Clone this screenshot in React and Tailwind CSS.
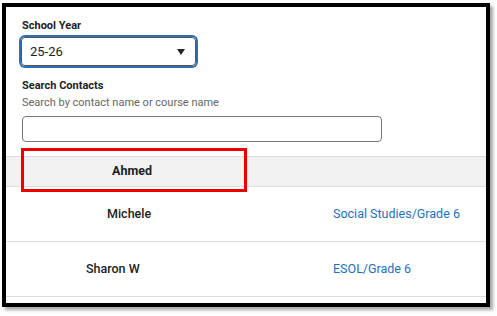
export default function App() {
  return (
    <div className="w-[497px] h-[316px] bg-white pt-[3px] pl-[2px]" style={{ fontFamily: "Roboto, 'Liberation Sans', sans-serif" }}>
      <div className="relative w-[488px] h-[304px] border-4 border-black bg-white shadow-[3px_3px_3px_rgba(0,0,0,0.35)]">
        <div className="pl-4 pt-[12px]">
          <p className="text-[11px] font-bold text-[#222] leading-[14px]">School Year</p>
          <div className="mt-[4px] ml-[-1px] w-[175px] h-[29px] rounded-[4px] border border-[#555] ring-2 ring-[#2d6fb4] flex items-center justify-between pl-[8px] pr-[10px]">
            <span className="text-[13px] text-[#222]">25-26</span>
            <svg width="8" height="6" viewBox="0 0 8 6">
              <path d="M0 0h8L4 6z" fill="#222" />
            </svg>
          </div>
          <p className="mt-[13px] text-[11px] font-bold text-[#222] leading-[14px]">Search Contacts</p>
          <p className="mt-[3px] text-[11px] text-[#666] leading-[14px]">Search by contact name or course name</p>
          <div className="mt-[6px] w-[360px] h-[26px] rounded-[4px] border border-[#777]"></div>
        </div>
        <div className="mt-[14px] border-t border-[#ddd]">
          <div className="h-[30px] bg-[#f2f2f2] border-b border-[#ddd] flex items-center">
            <span className="pl-[106px] text-[12.5px] font-bold text-[#222]">Ahmed</span>
          </div>
          <div className="h-[55px] border-b border-[#ddd] flex items-center">
            <span className="w-[327px] pl-[101px] text-[12.5px] font-medium text-[#222]">Michele</span>
            <a className="text-[12.5px] text-[#1f6fc0]">Social Studies/Grade 6</a>
          </div>
          <div className="h-[55px] border-b border-[#ddd] flex items-center">
            <span className="w-[327px] pl-[80px] text-[12.5px] font-medium text-[#222]">Sharon W</span>
            <a className="text-[12.5px] text-[#1f6fc0]">ESOL/Grade 6</a>
          </div>
        </div>
        <div className="absolute left-[15px] top-[141px] w-[226px] h-[44px] border-[3px] border-[#ee0000]"></div>
      </div>
    </div>
  );
}
